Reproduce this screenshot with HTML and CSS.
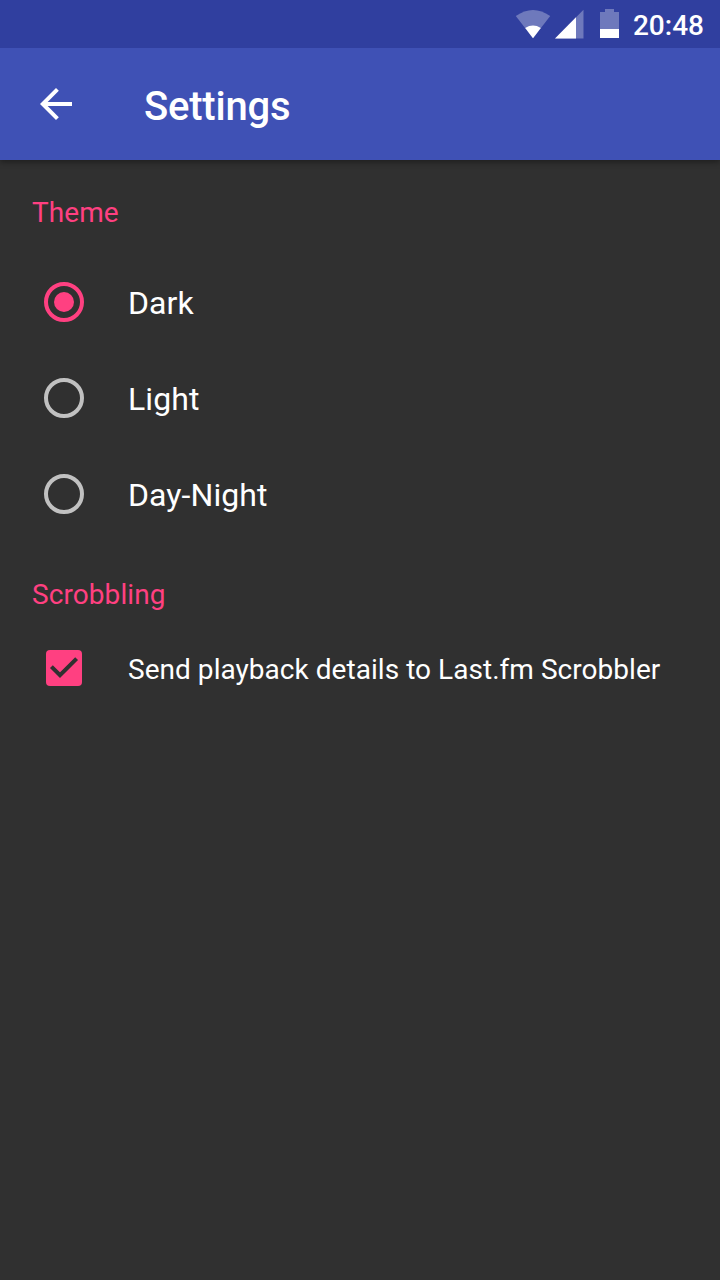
FILE: index.html
```html
<!DOCTYPE html>
<html lang="en">
<head>
<meta charset="utf-8">
<title>Settings</title>
<link rel="stylesheet" href="styles.css">
</head>
<body>
<div class="status">
  <svg class="wifi" width="36" height="30" viewBox="0 0 36 30"><path d="M.8 7Q18-5 35.200 7L18 29.300Z" fill="#fff" fill-opacity=".3"/><path d="M10.200 18.900Q18 14.300 25.800 18.900L18 29.300Z" fill="#fff"/></svg>
  <svg class="signal" width="30" height="30" viewBox="0 0 30 30"><path d="M0 29.500 28.500 .7V29.500Z" fill="#fff" fill-opacity=".3"/><path d="M0 29.500 21 8.300V29.500Z" fill="#fff"/></svg>
  <svg class="battery" width="20" height="30" viewBox="0 0 20 30"><path d="M5 0h9v3h5v17H0V3h5Z" fill="#fff" fill-opacity=".3"/><path d="M0 20h19v9H0Z" fill="#fff"/></svg>
  <span class="time">20:48</span>
</div>
<header class="toolbar">
  <svg class="back" width="48" height="48" viewBox="0 0 24 24"><path d="M20 11H7.830l5.590-5.590L12 4l-8 8 8 8 1.410-1.410L7.830 13H20v-2z" fill="#fff"/></svg>
  <h1 class="title">Settings</h1>
</header>
<main class="content">
  <h2 class="section">Theme</h2>
  <div class="option"><svg class="control" width="48" height="48" viewBox="0 0 48 48"><circle cx="24" cy="24" r="18" fill="none" stroke="#ff4081" stroke-width="4"/><circle cx="24" cy="24" r="10" fill="#ff4081"/></svg><span class="label">Dark</span></div>
  <div class="option"><svg class="control" width="48" height="48" viewBox="0 0 48 48"><circle cx="24" cy="24" r="18" fill="none" stroke="#c1c1c1" stroke-width="4"/></svg><span class="label">Light</span></div>
  <div class="option"><svg class="control" width="48" height="48" viewBox="0 0 48 48"><circle cx="24" cy="24" r="18" fill="none" stroke="#c1c1c1" stroke-width="4"/></svg><span class="label">Day-Night</span></div>
  <h2 class="section scrobbling">Scrobbling</h2>
  <div class="option check"><svg class="control" width="48" height="48" viewBox="0 0 48 48"><rect x="6" y="6" width="36" height="36" rx="4" fill="#ff4081"/><path d="m11.400 22.600 8.600 8.600L36.600 14.600" fill="none" stroke="#303030" stroke-width="4"/></svg><span class="label">Send playback details to Last.fm Scrobbler</span></div>
</main>
</body>
</html>
```
FILE: styles.css
```css
* { box-sizing: border-box; }
body { margin: 0; height: 1280px; background: #303030; color: #fff; font-family: Roboto, sans-serif; overflow: hidden; }
svg { display: block; flex: none; }
.status { position: relative; z-index: 1; display: flex; height: 48px; padding: 9px 16px 0 0; justify-content: flex-end; background: #303f9f; }
.signal { margin-left: 4px; }
.battery { margin-left: 15px; }
.time { margin-left: 13px; font-size: 28px; font-weight: 500; line-height: 33px; }
.toolbar { display: flex; align-items: center; height: 112px; padding: 0 32px; background: #3f51b5; box-shadow: 0 2px 6px rgba(0,0,0,.4); }
.title { margin: 6px 0 0 64px; font-size: 40px; font-weight: 500; line-height: 48px; letter-spacing: -.2px; }
.content { padding: 36px 32px 0; }
.section { margin: 0; color: #ff4081; font-size: 28px; font-weight: 400; line-height: 33px; letter-spacing: .08px; }
.scrobbling { margin-top: 36px; }
.option { display: flex; align-items: center; height: 96px; font-size: 32px; letter-spacing: .08px; }
.section + .option { margin-top: 25px; }
.control { margin: 0 40px 0 8px; }
.label { padding-top: 2px; }
.option.check { height: 64px; margin-top: 25px; font-size: 28px; letter-spacing: .04px; white-space: nowrap; }
```
